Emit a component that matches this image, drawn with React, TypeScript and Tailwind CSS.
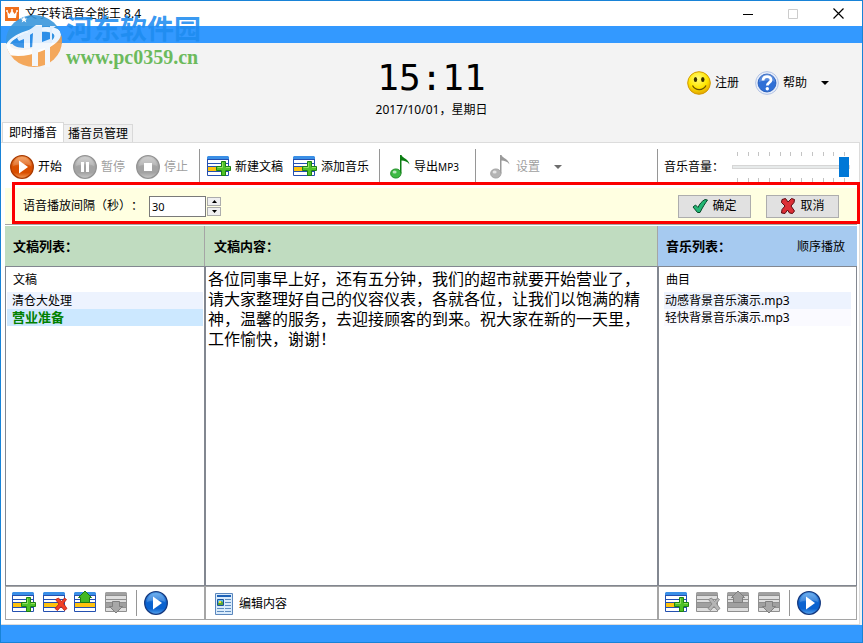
import { useState } from 'react';
import type { ReactNode } from 'react';

/* ── Data ───────────────────────────────────────────────────────────────────── */

const scripts = [
  { id: 1, title: '清仓大处理' },
  { id: 2, title: '营业准备' },
];

const tracks = ['动感背景音乐演示.mp3', '轻快背景音乐演示.mp3'];

const defaultContent =
  '各位同事早上好，还有五分钟，我们的超市就要开始营业了，请大家整理好自己的仪容仪表，各就各位，让我们以饱满的精神，温馨的服务，去迎接顾客的到来。祝大家在新的一天里，工作愉快，谢谢！';

/* ── Icons ──────────────────────────────────────────────────────────────────── */

type RoundKind = 'play' | 'pause' | 'stop';
type RoundTone = 'orange' | 'gray' | 'blue';

const roundTones: Record<RoundTone, [string, string, string]> = {
  orange: ['#f49a55', '#d94e00', '#a83a00'],
  gray: ['#c9c9c9', '#a3a3a3', '#939393'],
  blue: ['#5aa6ee', '#0a62cf', '#15397f'],
};

function RoundIcon({ kind, tone }: { kind: RoundKind; tone: RoundTone }) {
  const [light, base, edge] = roundTones[tone];
  const id = `round-${tone}`;
  return (
    <svg width="24" height="24" viewBox="0 0 24 24" aria-hidden="true">
      <defs>
        <linearGradient id={id} x1="0" y1="0" x2="0" y2="1">
          <stop offset="0" stopColor={light} />
          <stop offset="0.5" stopColor={base} />
          <stop offset="0.75" stopColor={base} />
          <stop offset="1" stopColor={light} />
        </linearGradient>
      </defs>
      <circle cx="12" cy="12" r="11.3" fill={`url(#${id})`} stroke={edge} strokeWidth="1.3" />
      <path d="M3 11a9 9 0 0 1 18 0c-4-2.500-13-2-18 0z" fill="#fff" opacity="0.18" />
      {kind === 'play' && <path d="M9 5.500v13l9-6.500z" fill="#fff" />}
      {kind === 'pause' && <path d="M8 7h3v10H8zM13 7h3v10h-3z" fill="#fff" />}
      {kind === 'stop' && <path d="M8 8h8v8H8z" fill="#fff" />}
    </svg>
  );
}

type ListMark = 'add' | 'remove' | 'up' | 'down';

function ListIcon({ mark, muted = false }: { mark: ListMark; muted?: boolean }) {
  const line = muted ? '#8f8f8f' : '#2450b0';
  const top = muted ? '#a0a0a0' : '#3a8fe6';
  const row = muted ? '#a0a0a0' : '#ffc20e';
  const paper = muted ? '#dedede' : '#fff';
  return (
    <svg width="24" height="24" viewBox="0 -1 24 24" className="overflow-visible" aria-hidden="true">
      <path d="M.5 1.500h21v18H.5z" fill={paper} stroke={line} />
      <path d="M1 0h20l1 1v2H0V1z" fill={top} />
      <path d="M0 3h22v1H0zM0 7h22v1H0zM0 10h22v1H0zM0 15h22v1H0z" fill={line} />
      <path d="M1 11h20v4H1z" fill={row} />
      {mark === 'add' && (
        <>
          <path d="M10 11h11v4H10z" fill={paper} />
          <path
            d="M14.500 5.500h4v5h5v4h-5v5h-4v-5h-5v-4h5z"
            fill="#4fc128"
            stroke="#1d8210"
          />
          <path d="M15.500 6.500v5h-5M19 11.500h4" fill="none" stroke="#93e05e" />
        </>
      )}
      {mark === 'remove' && (
        <path
          d="M12.500 7.500L15.500 6l3 3.500L21.500 6l2 1.500-3 4 3.500 5-2.500 2-3.500-4-3.500 4-2.500-2 4-4.500z"
          fill={muted ? '#b5b5b5' : '#f04028'}
          stroke={muted ? '#808080' : '#b81c10'}
          strokeWidth="0.8"
        />
      )}
      {mark === 'up' && (
        <path
          d="M11-1L17.500 5.500H15.500V10.500H6.500V5.500H4.500z"
          fill={muted ? '#a3a3a3' : '#43b822'}
          stroke={muted ? '#7f7f7f' : '#1d7a10'}
        />
      )}
      {mark === 'down' && (
        <path d="M7.500 9.500h7v5h3L11 21 4.500 14.500h3z" fill="#a8a8a8" stroke="#7f7f7f" />
      )}
    </svg>
  );
}

function NoteIcon({ muted = false }: { muted?: boolean }) {
  const stem = muted ? '#9a9a9a' : '#0b7d12';
  const head = muted ? '#b4b4b4' : '#3fba45';
  return (
    <svg width="20" height="24" viewBox="0 0 20 24" aria-hidden="true">
      <path d="M10 0h1.500c1 3.500 7 3.500 8 9.500-2-3-5-4-8-4v13H10z" fill={stem} />
      <ellipse cx="5.800" cy="18.500" rx="5.200" ry="4.600" fill={head} stroke={stem} strokeWidth="0.8" />
      <ellipse cx="4.600" cy="17" rx="2" ry="1.500" fill="#fff" opacity="0.65" />
    </svg>
  );
}

function SmileIcon() {
  return (
    <svg width="24" height="24" viewBox="0 0 24 24" aria-hidden="true">
      <defs>
        <radialGradient id="smile" cx="0.45" cy="0.3" r="0.7">
          <stop offset="0" stopColor="#fffb7a" />
          <stop offset="0.6" stopColor="#ffe600" />
          <stop offset="1" stopColor="#e2a400" />
        </radialGradient>
      </defs>
      <circle cx="12" cy="12" r="11.300" fill="url(#smile)" stroke="#d29a00" />
      <ellipse cx="8.500" cy="8.500" rx="1.700" ry="2.600" fill="#3a3000" />
      <ellipse cx="15.800" cy="8.500" rx="1.700" ry="2.600" fill="#3a3000" />
      <path d="M5.500 14.500c3 5.500 10.500 5.500 13.500 0" fill="none" stroke="#6b5200" strokeWidth="1.300" />
    </svg>
  );
}

function HelpIcon() {
  return (
    <svg width="24" height="24" viewBox="0 0 24 24" aria-hidden="true">
      <circle cx="12" cy="12" r="11.400" fill="#e6edfa" stroke="#b4c4e4" />
      <circle cx="12" cy="12" r="9" fill="#2f6fd6" stroke="#1f55b4" strokeWidth="0.8" />
      <path d="M4 11a8 8 0 0 1 16 0c-4-2-11-2-16 0z" fill="#fff" opacity="0.2" />
      <path
        d="M8 9.500c0-5 8-5 8-.5 0 2.800-3.700 2.500-3.700 5.500"
        fill="none"
        stroke="#fff"
        strokeWidth="2.800"
      />
      <circle cx="12.300" cy="17.800" r="1.700" fill="#fff" />
    </svg>
  );
}

function CheckIcon() {
  return (
    <svg width="16" height="16" viewBox="0 0 16 16" aria-hidden="true">
      <path
        d="M1 9l2.500-2 2.500 2.500C7.500 6 10 3 13 1.500l2.500.5C13 5.500 10.500 9.500 8 14.500H5.500z"
        fill="#22b573"
        stroke="#064a2a"
        strokeLinejoin="round"
      />
    </svg>
  );
}

function CrossIcon() {
  return (
    <svg width="16" height="16" viewBox="0 0 16 16" aria-hidden="true">
      <path
        d="M2 1.500l3.500-1L8 4l3.500-3.500 3 1-.5 3L11 8l3.500 5-2 2.500-3-.5L7.500 12 5 15.500l-3.500-.5.5-3.500L5 8 1.500 4.500z"
        fill="#dc2f36"
        stroke="#5c0a10"
        strokeLinejoin="round"
      />
    </svg>
  );
}

function DocumentIcon() {
  return (
    <svg width="18" height="22" viewBox="0 0 18 22" aria-hidden="true">
      <path d="M.5.5h17v21H.5z" fill="#d9ebfb" stroke="#5b87bd" />
      <path d="M2 2h14v2H2z" fill="#1e62b8" />
      <path d="M2.500 6.500h6v6h-6z" fill="#5fc0f0" stroke="#17509c" />
      <path d="M3 10l3-2 2 1v3H3z" fill="#5aa83a" />
      <path d="M4 8h2v2H4z" fill="#ffd83a" />
      <path
        d="M10 6.500h6M10 9.500h6M10 12.500h6M2 15.500h7M10 15.500h6M2 18.500h7M10 18.500h6"
        stroke="#5d8cc0"
      />
    </svg>
  );
}

function CrownIcon() {
  return (
    <svg width="14" height="14" viewBox="0 0 14 14" aria-hidden="true">
      <path d="M0 0h14v14H0z" fill="#f0701c" />
      <path d="M2 4l2.500 3L7 3l2.500 4L12 4l-1 7H3z" fill="#fff" />
      <circle cx="2" cy="4" r="1" fill="#fff" />
      <circle cx="7" cy="3" r="1" fill="#fff" />
      <circle cx="12" cy="4" r="1" fill="#fff" />
    </svg>
  );
}

function Caret({ className }: { className: string }) {
  return (
    <svg width="8" height="4" viewBox="0 0 8 4" className={className} aria-hidden="true">
      <path d="M0 0h8L4 4z" fill="currentColor" />
    </svg>
  );
}

function SiteLogo() {
  return (
    <svg width="58" height="54" viewBox="0 0 58 54" opacity="0.9" aria-hidden="true">
      <defs>
        <clipPath id="logo-disc">
          <ellipse cx="29" cy="27" rx="28" ry="26" />
        </clipPath>
      </defs>
      <g clipPath="url(#logo-disc)">
        <path d="M0 0h58v30H0z" fill="#3a97dc" />
        <path d="M0 34c18 9 40 4 58-14v34H0z" fill="#f5a04c" />
        {/* inner disc and the ring that sweeps round it */}
        <path
          d="M0 37C-2 24 22 14 40 13c16-1 20 7 12 15-9 9-34 18-52 12zM5 31c0 6 20 7 34 0 12-5 14-12 4-13C30 16 5 24 5 31z"
          fill="#fff"
          fillRule="evenodd"
        />
        <path d="M7 29c2-6 18-12 34-11l8 3-9 8c-12 6-30 7-33 0z" fill="#2c8de6" />
      </g>
      {/* numerals and the gate below them */}
      <path d="M12 24l8-5h5v15h-6v-9l-5 2zM23 17l8-6h6v17l8-3V12h6l-4 3v14l-2 4v20h-5V34l-7 2v16h-6V36l1-17-5 3z" fill="#f3f8fd" />
      <path d="M19 2l1 2.500h2.500l-2 1.500.8 2.500-2.300-1.500L16.700 8.500l.8-2.500-2-1.500H18z" fill="#fff" />
    </svg>
  );
}

/* ── Toolbar parts ──────────────────────────────────────────────────────────── */

interface ToolButtonProps {
  icon: ReactNode;
  label: ReactNode;
  disabled?: boolean;
}

function ToolButton({ icon, label, disabled }: ToolButtonProps) {
  return (
    <button
      type="button"
      disabled={disabled}
      className="flex items-center gap-1 whitespace-nowrap disabled:text-[#a0a0a0]"
    >
      {icon}
      <span>{label}</span>
    </button>
  );
}

function Divider() {
  return <div className="w-px self-stretch bg-[#969696]" />;
}

function VolumeSlider() {
  const [volume, setVolume] = useState(100);
  const ticks = Array.from({ length: 11 }, (_, i) => (
    <span key={i} className="h-1 w-px bg-[#c4c4c4]" />
  ));
  return (
    <div className="flex w-[118px] flex-col">
      <div className="flex justify-between px-[5px]">{ticks}</div>
      <input
        id="volume"
        type="range"
        min={0}
        max={100}
        value={volume}
        onChange={(e) => setVolume(Number(e.target.value))}
        className="h-[22px] w-full appearance-none bg-transparent [&::-webkit-slider-runnable-track]:h-1 [&::-webkit-slider-runnable-track]:border [&::-webkit-slider-runnable-track]:border-[#d6d6d6] [&::-webkit-slider-runnable-track]:bg-[#e7eaea] [&::-webkit-slider-thumb]:-mt-[9px] [&::-webkit-slider-thumb]:h-5 [&::-webkit-slider-thumb]:w-[10px] [&::-webkit-slider-thumb]:appearance-none [&::-webkit-slider-thumb]:bg-[#0078d7]"
      />
      <div className="flex justify-between px-[5px]">{ticks}</div>
    </div>
  );
}

function IconButton({ label, disabled, children }: { label: string; disabled?: boolean; children: ReactNode }) {
  return (
    <button type="button" aria-label={label} disabled={disabled} className="shrink-0">
      {children}
    </button>
  );
}

function ListActions({ name, muted = false }: { name: string; muted?: boolean }) {
  return (
    <footer className="flex h-[34px] items-center gap-[7px] border border-[#a5a5a5] px-[6px]">
      <IconButton label={`添加${name}`}>
        <ListIcon mark="add" />
      </IconButton>
      <IconButton label={`删除${name}`} disabled={muted}>
        <ListIcon mark="remove" muted={muted} />
      </IconButton>
      <IconButton label="上移" disabled={muted}>
        <ListIcon mark="up" muted={muted} />
      </IconButton>
      <IconButton label="下移" disabled>
        <ListIcon mark="down" muted />
      </IconButton>
      <div className="h-[26px] w-px shrink-0 bg-[#969696]" />
      <IconButton label={`播放${name}`}>
        <RoundIcon kind="play" tone="blue" />
      </IconButton>
    </footer>
  );
}

/* ── Window sections ────────────────────────────────────────────────────────── */

function TitleBar() {
  return (
    <header className="flex h-[25px] items-center bg-white pl-1">
      <CrownIcon />
      <h1 className="ml-[6px] flex-1 text-xs">文字转语音全能王 8.4</h1>
      <button type="button" aria-label="最小化" className="grid h-full w-[45px] place-items-center">
        <svg width="10" height="10" viewBox="0 0 10 10">
          <path d="M0 5.500h10" stroke="#000" />
        </svg>
      </button>
      <button type="button" aria-label="最大化" disabled className="grid h-full w-[45px] place-items-center">
        <svg width="10" height="10" viewBox="0 0 10 10">
          <path d="M.5.5h9v9h-9z" fill="none" stroke="#ccc" />
        </svg>
      </button>
      <button type="button" aria-label="关闭" className="grid h-full w-[47px] place-items-center">
        <svg width="11" height="11" viewBox="0 0 11 11">
          <path d="M.5.5l10 10M10.500.5l-10 10" stroke="#000" strokeWidth="1.200" />
        </svg>
      </button>
    </header>
  );
}

function Watermark() {
  return (
    <div className="pointer-events-none absolute top-[13px] left-1 flex">
      <SiteLogo />
      <div className="ml-[3px]">
        <p className="text-[27px] leading-[30px] font-bold text-[#1e8cf0]/90">河东软件园</p>
        <p className="font-['Liberation_Serif',serif] text-xl leading-[26px] font-bold text-[#6cba5c]">
          www.pc0359.cn
        </p>
      </div>
    </div>
  );
}

function Banner() {
  return (
    <div className="grid h-[79px] grid-cols-[1fr_auto_1fr] items-start">
      <div />
      <div className="pt-[13px] text-center">
        <p className="font-['DejaVu_Sans_Mono',monospace] text-4xl leading-[44px]">15:11</p>
        <p className="text-xs leading-5">2017/10/01，星期日</p>
      </div>
      <div className="flex items-center justify-end gap-4 pt-7 pr-[33px]">
        <ToolButton icon={<SmileIcon />} label="注册" />
        <button type="button" className="flex items-center gap-1">
          <HelpIcon />
          帮助
          <Caret className="ml-[10px]" />
        </button>
      </div>
    </div>
  );
}

function Toolbar() {
  return (
    <div className="flex h-[45px] items-stretch pt-[6px] pr-[7px] pb-1 pl-[5px]">
      <div className="flex items-center gap-[11px]">
        <ToolButton icon={<RoundIcon kind="play" tone="orange" />} label="开始" />
        <ToolButton icon={<RoundIcon kind="pause" tone="gray" />} label="暂停" disabled />
        <ToolButton icon={<RoundIcon kind="stop" tone="gray" />} label="停止" disabled />
        <Divider />
      </div>
      <div className="flex items-center gap-[10px] pl-[7px]">
        <ToolButton icon={<ListIcon mark="add" />} label="新建文稿" />
        <ToolButton icon={<ListIcon mark="add" />} label="添加音乐" />
        <Divider />
        <ToolButton
          icon={<NoteIcon />}
          label={
            <>
              导出<span className="text-[10px]">MP3</span>
            </>
          }
        />
      </div>
      <div className="flex flex-1 items-center gap-[14px] pl-4">
        <Divider />
        <button type="button" disabled className="flex items-center gap-[6px] text-[#a0a0a0]">
          <NoteIcon muted />
          设置
          <Caret className="ml-2 text-[#6d6d6d]" />
        </button>
      </div>
      <div className="flex items-center gap-2">
        <Divider />
        <label htmlFor="volume" className="-ml-[2px] whitespace-nowrap">
          音乐音量：
        </label>
        <VolumeSlider />
      </div>
    </div>
  );
}

function IntervalBar() {
  const [seconds, setSeconds] = useState('30');
  const step = (delta: number) =>
    setSeconds((prev) => String(Math.max(0, (Number(prev) || 0) + delta)));

  return (
    <form
      onSubmit={(e) => e.preventDefault()}
      className="relative flex h-[37px] items-center border-b border-[#a5a5a5] bg-[#ffffe1] pr-[18px] pl-[18px]"
    >
      <label htmlFor="interval" className="whitespace-nowrap">
        语音播放间隔（秒）：
      </label>
      <input
        id="interval"
        inputMode="numeric"
        value={seconds}
        onChange={(e) => setSeconds(e.target.value)}
        className="ml-[6px] h-[21px] w-[57px] border border-[#7a7a7a] bg-white px-[2px] text-[11px] outline-none"
      />
      <div className="ml-px flex flex-col gap-px">
        <button
          type="button"
          aria-label="增加"
          onClick={() => step(1)}
          className="grid h-[9px] w-[14px] place-items-center border border-[#acacac] bg-[#f0f0f0]"
        >
          <svg width="5" height="3" viewBox="0 0 5 3">
            <path d="M0 3h5L2.500 0z" />
          </svg>
        </button>
        <button
          type="button"
          aria-label="减少"
          onClick={() => step(-1)}
          className="grid h-[9px] w-[14px] place-items-center border border-[#acacac] bg-[#f0f0f0]"
        >
          <svg width="5" height="3" viewBox="0 0 5 3">
            <path d="M0 0h5L2.500 3z" />
          </svg>
        </button>
      </div>
      <div className="ml-auto flex gap-[15px]">
        <button
          type="submit"
          className="flex h-[23px] w-[73px] items-center justify-center gap-1 border border-[#adadad] bg-[#e1e1e1]"
        >
          <CheckIcon />
          确定
        </button>
        <button
          type="button"
          className="flex h-[23px] w-[73px] items-center justify-center gap-1 border border-[#adadad] bg-[#e1e1e1]"
        >
          <CrossIcon />
          取消
        </button>
      </div>
      {/* highlight frame drawn over the bar and its neighbours */}
      <div className="pointer-events-none absolute -top-[6px] -right-[3px] bottom-0 left-[7px] border-3 border-[#fb0000]" />
    </form>
  );
}

function ScriptPanel() {
  const [selected, setSelected] = useState(2);
  return (
    <section className="flex flex-col">
      <h2 className="flex h-10 items-center border-r border-[#a5a5a5] bg-[#c0dcc0] pt-px pl-2 text-[13px] font-bold">
        文稿列表：
      </h2>
      <div className="flex-1 border border-[#828790] px-px">
        <table className="w-full border-separate border-spacing-0 text-left">
          <thead>
            <tr>
              <th className="h-[25px] pl-[6px] font-normal">文稿</th>
            </tr>
          </thead>
          <tbody>
            {scripts.map((s) => (
              <tr
                key={s.id}
                onClick={() => setSelected(s.id)}
                className={
                  s.id === selected
                    ? 'bg-[#cce8ff] text-[13px] font-bold text-[#008000]'
                    : 'bg-[#edf3fe]'
                }
              >
                <td className="h-[17px] pl-[5px] leading-[17px]">{s.title}</td>
              </tr>
            ))}
          </tbody>
        </table>
      </div>
      <ListActions name="文稿" />
    </section>
  );
}

function ContentPanel() {
  const [content, setContent] = useState(defaultContent);
  return (
    <section className="flex flex-col">
      <h2 className="flex h-10 items-center border-r border-[#a5a5a5] bg-[#c0dcc0] pt-px pl-[9px] text-[13px] font-bold">
        <label htmlFor="content">文稿内容：</label>
      </h2>
      <textarea
        id="content"
        value={content}
        onChange={(e) => setContent(e.target.value)}
        className="block w-full flex-1 resize-none border border-[#828790] bg-white pt-[2px] pr-[14px] pl-[2px] text-base leading-5 outline-none"
      />
      <footer className="flex h-[34px] items-center border border-[#a5a5a5] pt-px pl-[9px]">
        <button type="button" className="flex items-center gap-[6px]">
          <DocumentIcon />
          编辑内容
        </button>
      </footer>
    </section>
  );
}

function MusicPanel() {
  return (
    <section className="flex flex-col">
      <div className="flex h-10 items-center justify-between bg-[#a6caf0] pt-px pr-3 pl-2">
        <h2 className="text-[13px] font-bold">音乐列表：</h2>
        <button type="button">顺序播放</button>
      </div>
      <div className="flex-1 border border-[#828790] px-[5px]">
        <table className="w-full border-separate border-spacing-0 text-left">
          <thead>
            <tr>
              <th className="h-[25px] pl-[2px] font-normal">曲目</th>
            </tr>
          </thead>
          <tbody>
            {tracks.map((name) => (
              <tr key={name} className="odd:bg-[#edf3fe] even:bg-[#fafaff]">
                <td className="h-[17px] pl-px leading-[17px]">{name}</td>
              </tr>
            ))}
          </tbody>
        </table>
      </div>
      <ListActions name="音乐" muted />
    </section>
  );
}

/* ── App ────────────────────────────────────────────────────────────────────── */

export default function App() {
  return (
    <div
      lang="zh-CN"
      className="relative flex min-h-screen flex-col border border-[#1883d7] bg-[#f3f3f3] font-['Noto_Sans','Noto_Sans_CJK_SC',sans-serif] text-xs text-black select-none [text-spacing-trim:space-all]"
    >
      <TitleBar />
      <div className="h-[17px] bg-[#3399ff]" />
      <Banner />
      <nav className="flex items-end pl-px">
        <button type="button" className="h-5 border border-b-0 border-[#d9d9d9] bg-white px-[6px]">
          即时播音
        </button>
        <button type="button" className="h-[18px] border border-b-0 border-l-0 border-[#d9d9d9] bg-[#f0f0f0] px-1 text-xs">
          播音员管理
        </button>
      </nav>
      <main className="mr-[2px] flex flex-1 flex-col border-t border-r border-b border-[#dcdcdc] bg-white pr-[2px] pb-1 pl-1">
        <Toolbar />
        <IntervalBar />
        <div className="grid flex-1 grid-cols-[200px_minmax(0,1fr)_199px] pt-px">
          <ScriptPanel />
          <ContentPanel />
          <MusicPanel />
        </div>
      </main>
      <div className="h-[17px] bg-[#3399ff]" />
      <Watermark />
    </div>
  );
}
